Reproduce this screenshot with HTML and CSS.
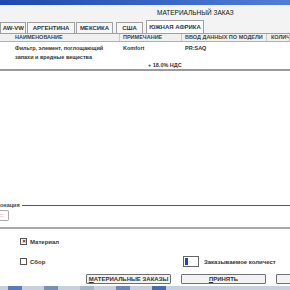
FILE: index.html
```html
<!DOCTYPE html>
<html lang="ru">
<head>
    <meta charset="UTF-8">
    <title>Материальный заказ</title>
    <link rel="stylesheet" href="styles.css">
</head>
<body>
    <div class="window">
        <div class="titlebar"></div>
        <div class="caption">МАТЕРИАЛЬНЫЙ ЗАКАЗ</div>

        <div class="tabs">
            <div class="tab t1">AW-VW</div>
            <div class="tab t2">АРГЕНТИНА</div>
            <div class="tab t3">МЕКСИКА</div>
            <div class="tab t4">США</div>
            <div class="tab t5 active">ЮЖНАЯ АФРИКА</div>
        </div>

        <div class="grid">
            <div class="row head">
                <div class="c1">НАИМЕНОВАНИЕ</div>
                <div class="c2">ПРИМЕЧАНИЕ</div>
                <div class="c3">ВВОД ДАННЫХ ПО МОДЕЛИ</div>
                <div class="c4">КОЛИЧ</div>
            </div>
            <div class="row item">
                <div class="c1">Фильтр, элемент, поглощающий<br>запахи и вредные вещества</div>
                <div class="c2">Komfort</div>
                <div class="c3">PR:SAQ</div>
                <div class="c4"></div>
            </div>
            <div class="vat">+ 18.0% НДС</div>
        </div>

        <div class="list"></div>

        <div class="info">
            <div class="legend"><span>онация</span></div>
            <div class="mini">∷</div>
        </div>

        <div class="options">
            <label class="check"><span class="box checked">✕</span>Материал</label>
            <div class="line2">
                <label class="check"><span class="box"></span>Сбор</label>
                <div class="qty"><span class="field"><i></i></span>Заказываемое количест</div>
            </div>
            <div class="buttons">
                <button class="btn wide"><u>М</u>АТЕРИАЛЬНЫЕ ЗАКАЗЫ</button>
                <button class="btn wide"><u>П</u>РИНЯТЬ</button>
                <button class="btn"></button>
            </div>
        </div>

        <div class="taskbar">
            <span class="ico a"></span>
            <span class="ico b"></span>
            <span class="ico c"></span>
            <span class="ico d"></span>
            <span class="ico e"></span>
        </div>
    </div>
</body>
</html>
```

FILE: styles.css
```css
body {
    margin: 0;
    font-family: 'Liberation Sans', Arial, sans-serif;
    background: #fff;
    overflow: hidden;
}
.window {
    width: 290px;
    height: 290px;
    display: flex;
    flex-direction: column;
    background: #fff;
}
.titlebar {
    height: 5px;
    background: linear-gradient(to right, #1d48b0, #4f7ed6);
}
.caption {
    height: 15px;
    background: #f3f3f3;
    font-size: 6.5px;
    line-height: 16px;
    padding-left: 157px;
    color: #111;
}

/* Tabs */
.tabs {
    display: flex;
    align-items: flex-end;
    height: 13px;
    background: #f3f3f3;
    border-bottom: 1px solid #a0a0a0;
}
.tab {
    height: 10px;
    font-size: 6px;
    font-weight: bold;
    line-height: 10px;
    text-align: center;
    border: 1px solid #a0a0a0;
    border-bottom: none;
    background: #f6f6f6;
    color: #333;
    white-space: nowrap;
    overflow: hidden;
    flex: none;
}
.t1 { width: 23px; margin-right: 1px; text-align: right; padding-right: 1px; }
.t2 { width: 46px; margin-right: 1px; }
.t3 { width: 35px; margin-right: 3px; }
.t4 { width: 25px; margin-right: 3px; }
.t5 { width: 56px; }
.tab.active {
    height: 12px;
    line-height: 12px;
    background: #fff;
}

/* Grid */
.grid {
    background: #fff;
    border-bottom: 2px solid #9a9a9a;
    padding-bottom: 1px;
}
.row {
    display: flex;
    font-size: 5.5px;
    font-weight: bold;
    color: #333;
}
.row.head {
    height: 7px;
    line-height: 7px;
    background: #f0f0f0;
    border-bottom: 1px solid #b0b0b0;
    color: #444;
}
.row.head > div {
    border-right: 1px solid #c8c8c8;
}
.row.item {
    padding-top: 2px;
    line-height: 9px;
}
.c1 { width: 104px; padding-left: 15px; }
.c2 { width: 58px; padding-left: 3px; }
.c3 { width: 81px; padding-left: 3px; }
.c4 { flex: 1; padding-left: 4px; white-space: nowrap; overflow: hidden; }
.row.item > div { border-right: 1px solid transparent; }
.vat {
    font-size: 5.5px;
    font-weight: bold;
    color: #333;
    padding-left: 148px;
    line-height: 6px;
}

.list {
    flex: 1;
    background: #fff;
}

/* Info group */
.info {
    height: 25px;
    border-bottom: 2px solid #a8a8a8;
}
.legend {
    display: flex;
    align-items: center;
    font-size: 5.5px;
    font-weight: bold;
    color: #444;
    height: 6px;
}
.legend::after {
    content: '';
    flex: 1;
    border-top: 1px solid #555;
    margin-left: 2px;
}
.mini {
    width: 8px;
    height: 9px;
    margin-top: 2px;
    border: 1px solid #aaa;
    border-left: none;
    border-radius: 0 2px 2px 0;
    font-size: 5px;
    color: #999;
    line-height: 9px;
}

/* Options */
.options {
    height: 57px;
    display: flex;
    flex-direction: column;
    font-size: 6px;
    font-weight: bold;
    color: #333;
}
.check {
    display: flex;
    align-items: center;
    gap: 3px;
    padding-left: 20px;
}
.options > .check {
    margin-top: 9px;
}
.box {
    width: 5px;
    height: 5px;
    border: 1px solid #555;
    font-size: 5px;
    line-height: 5px;
    text-align: center;
    background: #fff;
}
.line2 {
    display: flex;
    align-items: center;
    justify-content: space-between;
    margin-top: 11px;
}
.qty {
    display: flex;
    align-items: center;
    gap: 5px;
    width: 107px;
    font-size: 6px;
    white-space: nowrap;
    overflow: hidden;
}
.field {
    width: 13px;
    height: 9px;
    border: 1px solid #666;
    background: #fff;
    display: flex;
    align-items: center;
    padding-left: 1px;
    flex: none;
}
.field i {
    width: 3px;
    height: 7px;
    background: #2a3fc0;
}
.buttons {
    display: flex;
    gap: 10px;
    padding-left: 86px;
    margin-top: 7px;
}
.btn {
    width: 85px;
    height: 10px;
    padding: 0;
    font-family: inherit;
    font-size: 6px;
    font-weight: bold;
    line-height: 8px;
    color: #333;
    background: #f2f2f2;
    border: 1px solid #707070;
    border-radius: 1px;
    flex: none;
}
.btn:last-child {
    width: 20px;
}

/* Taskbar strip */
.taskbar {
    height: 4px;
    background: #c8d0dc;
    display: flex;
    gap: 22px;
    padding-left: 8px;
}
.ico {
    width: 14px;
    height: 4px;
    background: #5a7ab8;
}
.ico.b { background: #7c8fb0; }
.ico.c { background: #a8b4c8; }
.ico.d { background: #6d88b4; }
.ico.e { background: #4a6aa8; }
```
